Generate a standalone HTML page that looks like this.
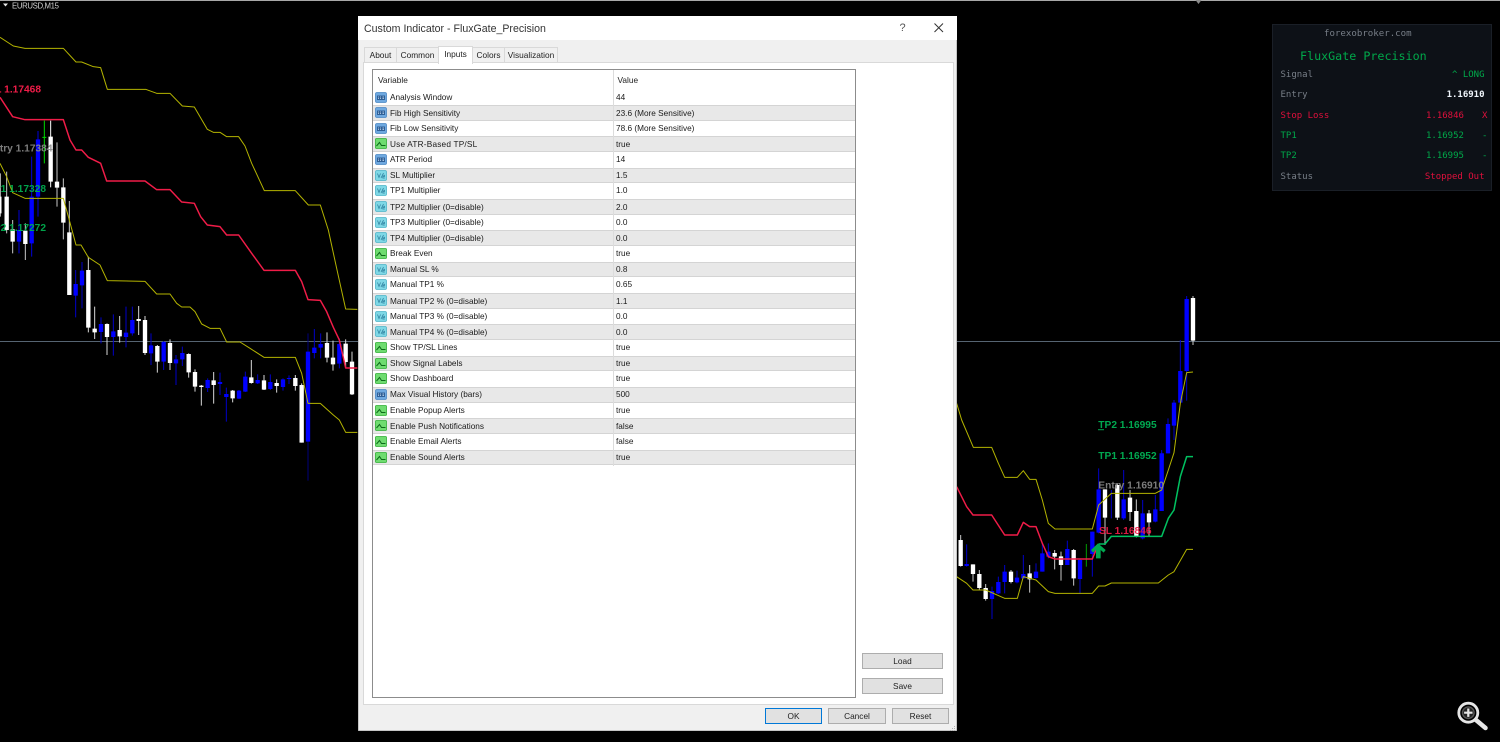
<!DOCTYPE html>
<html lang="en"><head><meta charset="utf-8"><title>FluxGate Precision</title>
<style>
html,body{margin:0;padding:0;background:#000;width:1500px;height:742px;overflow:hidden}
body{position:relative;font-family:"Liberation Sans",sans-serif}
svg.chart{position:absolute;left:0;top:0}
.a{position:absolute;white-space:nowrap}
#dlg{position:absolute;left:358px;top:16px;width:598.5px;height:715px;background:#f0f0f0;box-shadow:inset 0 0 0 .5px #9a9a9a}
#title{position:absolute;left:0;top:0;right:0;height:24px;background:#fff}
.tab{position:absolute;top:31px;height:14.5px;background:#f0f0f0;border:1px solid #d9d9d9;border-bottom:none;font-size:8.3px;line-height:15px;text-align:center;color:#222;box-sizing:content-box}
#panel{position:absolute;left:5px;top:45.5px;width:588.5px;height:641px;background:#fff;border:1px solid #d9d9d9;box-sizing:content-box}
#tbl{position:absolute;left:14px;top:53px;width:482px;height:626.5px;background:#fff;border:1px solid #8c8c8c}
.row{position:relative;height:15.67px;box-sizing:border-box;font-size:8.25px;line-height:15px;color:#1a1a1a}
.g{background:#e8e8e8;border-top:1px solid #d4d4d4;border-bottom:1px solid #d4d4d4}
.n{position:absolute;left:17px;top:0}
.v{position:absolute;left:243px;top:0}
.g .n,.g .v{top:-.5px}
.row svg{position:absolute;left:2px;top:2px}
.g svg{top:1px}
.btn{position:absolute;background:#e1e1e1;border:1px solid #adadad;box-sizing:border-box;font-size:8.3px;text-align:center;color:#222;line-height:14px}
#dash{position:absolute;left:1272px;top:24px;width:220px;height:167px;background:#0d1117;box-shadow:inset 0 0 0 1px #1a1f27;font-family:"DejaVu Sans Mono","Liberation Mono",monospace;font-size:9px}
#dash div{position:absolute;white-space:nowrap;line-height:12px}
</style></head><body>

<svg class="chart" width="1500" height="742" viewBox="0 0 1500 742" fill="none">
<rect x="0" y="0" width="1500" height="1" fill="#a8a8a8"/>
<path d="M1195.500 0h6l-3 4z" fill="#8a8a8a"/>
<path d="M3 3.500h5l-2.500 3z" fill="#e8e8e8"/>
<line x1="0" y1="341.500" x2="1500" y2="341.500" stroke="#566472" stroke-width="1"/>

<!-- left candles, upper -->
<g transform="scale(.33333)">
<path stroke="#c8c8c8" stroke-width="3" d="M1 520V650M20 515V700M38 660V760M76 670V780M171 427V620M190 535V718M208 603V880"/>
<path stroke="#fff" stroke-width="3" d="M152 362V562"/>
<path stroke="#0000d8" stroke-width="3" d="M57 630V760M95 470V770M114 393V650"/>
<path stroke="#fff" stroke-width="13" d="M-2 590V640M20 590V690M38 688V725M76 692V732M152 410V545M171 545V563M190 562V668M208 697V885"/>
<path stroke="#0000ff" stroke-width="13" d="M57 690V725M95 590V730M114 418V590"/>
<path stroke="#00d800" stroke-width="3" d="M133 362V490M127 412H139"/>
</g>

<!-- left candles, lower -->
<g transform="translate(0 240) scale(.33333)">
<path stroke="#d8d8d8" stroke-width="3" d="M265 50V277M284 200V297M321 250V345M359 228V308M416 198V285M435 228V345M472 315V398M510 298V390M566 340V413M585 388V455M604 435V497M641 396V491M698 450V487M754 360V431M792 405V450M830 418V458M886 405V452M905 430V608M981 277V367M999 302V392M1037 298V385M1056 335V465"/>
<path stroke="#0000c8" stroke-width="3" d="M227 90V232M246 66V205M303 232V310M340 223V347M378 200V322M397 200V287M453 280V375M491 303V390M528 345V435M547 320V378M623 415V456M660 398V465M679 443V545M717 450V477M736 395V456M773 403V432M811 403V450M849 415V452M867 406V432M943 267V355M962 280V355M1018 295V385"/>
<path stroke="#00007c" stroke-width="3" d="M924 280V722"/>
<path stroke="#fff" stroke-width="13" d="M265 90V263M284 266V277M321 252V291M359 270V289M416 237V243M435 240V339M472 318V365M510 309V369M566 342V397M585 396V440M604 437V441M641 421V435M698 452V475M754 412V429M792 421V449M830 429V438M886 414V438M905 435V608M981 309V353M999 353V373M1037 311V366M1056 365V463"/>
<path stroke="#0000ff" stroke-width="13" d="M227 132V167M246 92V136M303 252V276M340 274V291M378 278V291M397 240V280M453 316V340M491 306V365M528 358V370M547 339V358M623 420V444M660 426V432M679 462V471M717 452V476M736 410V455M773 420V430M811 426V447M849 418V441M867 414V417M924 335V605M943 323V339M962 312V323M1018 312V371"/>
</g>

<!-- left lines -->
<g transform="scale(.33333)" stroke-linejoin="round">
<path stroke="#b4b400" stroke-width="3" d="M0 112L40 138L75 145H190L228 186H245L280 200L302 203L322 268H437L470 280H510L547 318L583 321L622 388L640 397H660L680 410H716L735 438L755 490L793 572H886L925 615H961L985 690L1010 805L1037 927L1072 928"/>
<path stroke="#f01c48" stroke-width="4.400" d="M0 292L38 350L75 359H190L210 420L228 450H245L265 472L302 490L320 543H435L470 569H510L545 606L583 610L602 650L622 675L660 680L680 705H716L755 760L792 811H886L905 845L924 899L961 901L980 935L1000 982L1018 1020L1037 1104H1072"/>
<path stroke="#b4b400" stroke-width="3" d="M0 490L20 530L38 578L75 595H190L210 668L228 735H243L265 772L300 795L322 842L435 844L470 882H510L530 910L545 921H570L585 935L605 972L630 985H660L680 1026H720L750 1045L792 1072H886L905 1120L924 1210H961L1000 1245L1018 1260L1037 1297H1072"/>
</g>

<!-- right candles -->
<g transform="translate(955 450) scale(.33333)">
<path stroke="#c8c8c8" stroke-width="3" d="M17 255V350M54 343V395M73 360V420M92 402V452M168 360V400M224 345V428M299 300V358M318 305V392M356 297V407M450 118V285M487 100V210M525 120V213M544 148V262M582 180V260"/>
<path stroke="#0000c8" stroke-width="3" d="M35 283V350M111 410V507M130 380V432M149 345V430M186 362V400M205 315V385M243 340V385M262 280V365M280 280V325M337 272V345M375 325V432M412 245V380M431 55V250M469 120V205M506 60V210M563 150V268M601 135V217M620 0V183"/>
<path stroke="#fff" stroke-width="13" d="M17 270V348M54 343V372M73 372V414M92 414V447M168 365V396M224 370V388M299 309V320M318 319V345M356 300V385M450 118V203M487 105V203M525 143V186M544 183V260M582 190V217"/>
<path stroke="#0000ff" stroke-width="13" d="M35 342V348M111 423V447M130 396V430M149 365V396M186 383V397M205 372V385M243 365V384M262 310V365M280 305V320M337 297V345M375 330V387M412 245V312M431 118V248M506 148V205M563 190V265M601 178V215M620 10V183"/>
<path stroke="#00a000" stroke-width="3" d="M394 282V350"/>
</g>
<g transform="translate(955 280) scale(.33333)">
<path stroke="#0000c8" stroke-width="3" d="M620 515V540M639 415V520M657 360V480M676 180V370M695 48V362"/>
<path stroke="#c8c8c8" stroke-width="3" d="M714 48V195"/>
<path stroke="#0000ff" stroke-width="13" d="M620 520V540M639 432V520M657 368V437M676 273V368M695 57V273"/>
<path stroke="#fff" stroke-width="13" d="M714 54V182"/>
</g>

<!-- right lines -->
<g transform="translate(955 450) scale(.33333)" stroke-linejoin="round">
<path stroke="#b4b400" stroke-width="3" d="M5 -140L20 -90L55 -8H110L130 40L149 82H187L205 62L224 88H243L262 150L280 220L300 237H412L431 165L469 130H601L620 120L640 60L657 8L676 -140L695 -232L714 -234"/>
<path stroke="#f01c48" stroke-width="4.400" d="M5 110L35 170L54 195H110L149 255H187L205 217L224 230H243L262 280L280 320L300 327H412L425 295"/>
<path stroke="#00c060" stroke-width="4.600" d="M431 282H450L469 259H620L640 205L657 180L676 80L695 20H714"/>
<path stroke="#b4b400" stroke-width="3" d="M5 380L35 400L54 420H92L149 445H187L205 380L243 390L280 425L300 430H412L431 408H450L469 399H610L640 375L657 365L695 298H714"/>
<path fill="#00a850" d="M429 280L452 300L446 308L437 300V325H423V300L414 308L408 300Z"/>
</g>
<line x1="1098" y1="429.700" x2="1104" y2="429.700" stroke="#00a850" stroke-width="1"/>

<g font-family="'Liberation Sans',sans-serif" font-weight="700" font-size="10.200">
<text x="41" y="92.500" text-anchor="end" fill="#f01c48">SL 1.17468</text>
<text x="52.500" y="151.500" text-anchor="end" fill="#8a8a8a" fill-opacity=".9">Entry 1.17384</text>
<text x="46" y="192" text-anchor="end" fill="#00b050" fill-opacity=".92">TP1 1.17328</text>
<text x="46" y="231" text-anchor="end" fill="#00b050" fill-opacity=".92">TP2 1.17272</text>
<text x="1098.300" y="428" fill="#00a850">TP2 1.16995</text>
<text x="1098.300" y="459" fill="#00a850">TP1 1.16952</text>
<text x="1098.300" y="488.500" fill="#8a8a8a" fill-opacity=".9">Entry 1.16910</text>
<text x="1099" y="534" fill="#f01c48" fill-opacity=".92">SL 1.16846</text>
</g>
<text x="12" y="8.500" font-family="'Liberation Sans',sans-serif" font-size="7.800" fill="#d0d0d0" textLength="47">EURUSD,M15</text>

<!-- magnifier -->
<g>
<line x1="1476" y1="720" x2="1485.500" y2="728" stroke="#e6e6e6" stroke-width="4.500" stroke-linecap="round"/>
<circle cx="1468.300" cy="712.700" r="9.500" fill="#000" stroke="#e6e6e6" stroke-width="2.800"/>
<circle cx="1468.300" cy="712.700" r="5.800" fill="#222" stroke="#555" stroke-width="1.400"/>
<path d="M1468.300 708.500v8.400M1464.100 712.700h8.400" stroke="#e6e6e6" stroke-width="2.200"/>
</g>

<defs>
<symbol id="bl" viewBox="0 0 12 11"><rect x=".5" y=".5" width="11" height="10" rx="1.500" fill="#6fa9e0" stroke="#4a86c4" stroke-width=".8"/><rect x="2" y="3.500" width="8" height="4.500" fill="#2f5f96"/><path d="M3 5h1M5 5h1M7.500 5h1.500M3 6.500h1M5 6.500h1M7.500 6.500h1.500" stroke="#cfe4f8" stroke-width=".7"/></symbol>
<symbol id="gr" viewBox="0 0 12 11"><rect x=".5" y=".5" width="11" height="10" rx="1" fill="#6fdc70" stroke="#2fae34" stroke-width=".8"/><path d="M1.500 8L4.500 4.500L6.500 7.500H10.500" stroke="#0d6a1a" stroke-width="1" fill="none"/></symbol>
<symbol id="te" viewBox="0 0 12 11"><rect x=".5" y=".5" width="11" height="10" rx="1.500" fill="#7fd8e6" stroke="#4db4c8" stroke-width=".8"/><path d="M2.500 3.500L4 7.500L5.500 3.500M6 8L8.500 3M7.500 5.200H9.500V6.500H7.800V8H9.800" stroke="#2a7d9c" stroke-width=".7" fill="none"/></symbol>
</defs>
</svg>

<div id="dlg">
 <div id="title"></div>
 <div class="a" style="left:6px;top:6.500px;font-size:10.600px;line-height:13px;color:#333">Custom Indicator - FluxGate_Precision</div>
 <div class="a" style="left:541.500px;top:5px;font-size:11px;line-height:14px;color:#555">?</div>
 <svg class="a" style="left:576px;top:7px" width="10" height="10" fill="none"><path d="M.5.500L9 9M9 .500L.5 9" stroke="#333" stroke-width="1"/></svg>

 <div class="tab" style="left:6px;width:31px">About</div>
 <div class="tab" style="left:38px;width:41px">Common</div>
 <div class="tab" style="left:114px;width:31px">Colors</div>
 <div class="tab" style="left:146px;width:52px">Visualization</div>
 <div id="panel"></div>
 <div class="tab" style="left:80px;top:29.500px;width:33px;height:17px;background:#fff;line-height:15px;z-index:2">Inputs</div>

 <div id="tbl">
  <div style="height:19.500px;position:relative;font-size:8.300px;line-height:20px;color:#222">
   <span class="a" style="left:5px">Variable</span><span class="a" style="left:244.500px">Value</span>
  </div>
  <div class="a" style="left:240px;top:0;width:1px;height:396px;background:#dcdcdc;z-index:3"></div>
  <div class="row"><svg width="12" height="11"><use href="#bl"/></svg><span class="n">Analysis Window</span><span class="v">44</span></div>
  <div class="row g"><svg width="12" height="11"><use href="#bl"/></svg><span class="n">Fib High Sensitivity</span><span class="v">23.6 (More Sensitive)</span></div>
  <div class="row"><svg width="12" height="11"><use href="#bl"/></svg><span class="n">Fib Low Sensitivity</span><span class="v">78.6 (More Sensitive)</span></div>
  <div class="row g"><svg width="12" height="11"><use href="#gr"/></svg><span class="n" style="letter-spacing:.2px">Use ATR-Based TP/SL</span><span class="v">true</span></div>
  <div class="row"><svg width="12" height="11"><use href="#bl"/></svg><span class="n">ATR Period</span><span class="v">14</span></div>
  <div class="row g"><svg width="12" height="11"><use href="#te"/></svg><span class="n">SL Multiplier</span><span class="v">1.5</span></div>
  <div class="row"><svg width="12" height="11"><use href="#te"/></svg><span class="n">TP1 Multiplier</span><span class="v">1.0</span></div>
  <div class="row g"><svg width="12" height="11"><use href="#te"/></svg><span class="n">TP2 Multiplier (0=disable)</span><span class="v">2.0</span></div>
  <div class="row"><svg width="12" height="11"><use href="#te"/></svg><span class="n">TP3 Multiplier (0=disable)</span><span class="v">0.0</span></div>
  <div class="row g"><svg width="12" height="11"><use href="#te"/></svg><span class="n">TP4 Multiplier (0=disable)</span><span class="v">0.0</span></div>
  <div class="row"><svg width="12" height="11"><use href="#gr"/></svg><span class="n">Break Even</span><span class="v">true</span></div>
  <div class="row g"><svg width="12" height="11"><use href="#te"/></svg><span class="n">Manual SL %</span><span class="v">0.8</span></div>
  <div class="row"><svg width="12" height="11"><use href="#te"/></svg><span class="n">Manual TP1 %</span><span class="v">0.65</span></div>
  <div class="row g"><svg width="12" height="11"><use href="#te"/></svg><span class="n">Manual TP2 % (0=disable)</span><span class="v">1.1</span></div>
  <div class="row"><svg width="12" height="11"><use href="#te"/></svg><span class="n">Manual TP3 % (0=disable)</span><span class="v">0.0</span></div>
  <div class="row g"><svg width="12" height="11"><use href="#te"/></svg><span class="n">Manual TP4 % (0=disable)</span><span class="v">0.0</span></div>
  <div class="row"><svg width="12" height="11"><use href="#gr"/></svg><span class="n">Show TP/SL Lines</span><span class="v">true</span></div>
  <div class="row g"><svg width="12" height="11"><use href="#gr"/></svg><span class="n">Show Signal Labels</span><span class="v">true</span></div>
  <div class="row"><svg width="12" height="11"><use href="#gr"/></svg><span class="n">Show Dashboard</span><span class="v">true</span></div>
  <div class="row g"><svg width="12" height="11"><use href="#bl"/></svg><span class="n">Max Visual History (bars)</span><span class="v">500</span></div>
  <div class="row"><svg width="12" height="11"><use href="#gr"/></svg><span class="n">Enable Popup Alerts</span><span class="v">true</span></div>
  <div class="row g"><svg width="12" height="11"><use href="#gr"/></svg><span class="n">Enable Push Notifications</span><span class="v">false</span></div>
  <div class="row"><svg width="12" height="11"><use href="#gr"/></svg><span class="n">Enable Email Alerts</span><span class="v">false</span></div>
  <div class="row g"><svg width="12" height="11"><use href="#gr"/></svg><span class="n">Enable Sound Alerts</span><span class="v">true</span></div>
 </div>

 <div class="btn" style="left:504px;top:637px;width:81px;height:16px">Load</div>
 <div class="btn" style="left:504px;top:662px;width:81px;height:16px">Save</div>
 <div class="btn" style="left:407px;top:692px;width:57px;height:16px;border:1.500px solid #0078d7;line-height:14px">OK</div>
 <div class="btn" style="left:470px;top:692px;width:58px;height:16px">Cancel</div>
 <div class="btn" style="left:534px;top:692px;width:57px;height:16px">Reset</div>
 <svg class="a" style="left:592px;top:709px" width="6" height="6"><path d="M4 1h1v1H4zM2 3h1v1H2zM4 3h1v1H4zM0 5h1v1H0zM2 5h1v1H2zM4 5h1v1H4z" fill="#b0b0b0"/></svg>
</div>

<div id="dash">
 <div style="left:52px;top:4px;color:#787f88;font-size:9.100px">forexobroker.com</div>
 <div style="left:28px;top:25px;color:#00a84a;font-size:11.700px;line-height:14px">FluxGate Precision</div>
 <div style="left:8.500px;top:44.500px;color:#787f88">Signal</div>
 <div style="right:7.500px;top:44.500px;color:#00a84a">^ LONG</div>
 <div style="left:8.500px;top:65px;color:#787f88">Entry</div>
 <div style="right:7.500px;top:65px;color:#f0f6fc;font-weight:700">1.16910</div>
 <div style="left:8.500px;top:85.500px;color:#e0103c">Stop Loss</div>
 <div style="left:154px;top:85.500px;color:#e0103c">1.16846</div>
 <div style="left:210px;top:85.500px;color:#e0103c">X</div>
 <div style="left:8.500px;top:106px;color:#00a84a">TP1</div>
 <div style="left:154px;top:106px;color:#00a84a">1.16952</div>
 <div style="left:210px;top:106px;color:#00a84a">-</div>
 <div style="left:8.500px;top:126px;color:#00a84a">TP2</div>
 <div style="left:154px;top:126px;color:#00a84a">1.16995</div>
 <div style="left:210px;top:126px;color:#00a84a">-</div>
 <div style="left:8.500px;top:146.500px;color:#787f88">Status</div>
 <div style="right:7.500px;top:146.500px;color:#e0103c">Stopped Out</div>
</div>
</body></html>
